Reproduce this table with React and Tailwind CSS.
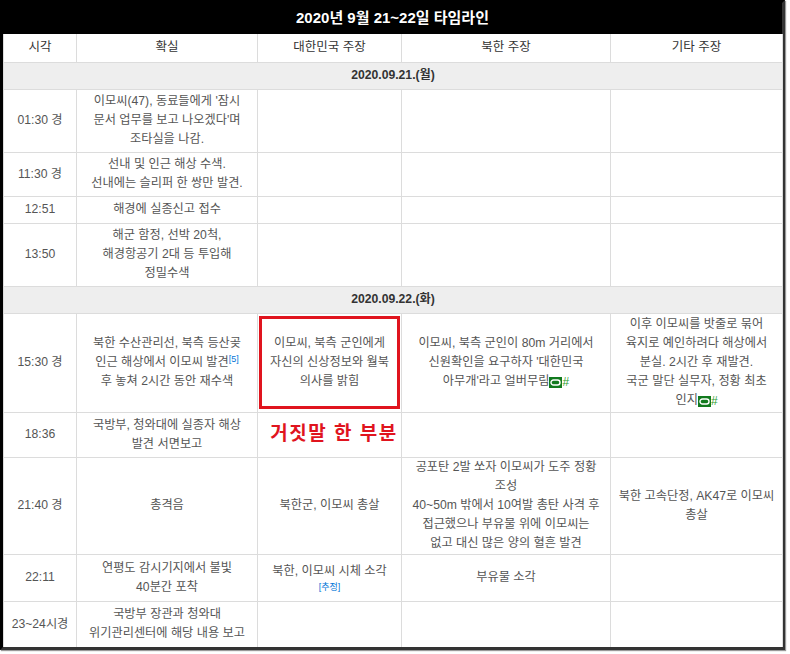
const FONT = { fontFamily: '"Liberation Sans", "Noto Sans CJK KR", sans-serif' }

function LinkIcon() {
  return (
    <span className="inline-flex items-center align-[-1px]">
      <span className="inline-flex items-center justify-center w-[13px] h-[11px] bg-[#127a1e]">
        <svg width="11" height="7" viewBox="0 0 11 7">
          <rect x="1" y="1" width="9" height="5" rx="2.5" fill="none" stroke="#fff" strokeWidth="1.4" />
        </svg>
      </span>
      <span className="text-[#2e9e2e] text-[12px]">#</span>
    </span>
  )
}

const td = 'border border-[#dcdcdc] text-center align-middle p-0'

function DateRow({ label, h }) {
  return (
    <tr className={h}>
      <td colSpan={5} className={`${td} bg-[#eeeeee] font-bold text-[#333]`}>{label}</td>
    </tr>
  )
}

export default function App() {
  return (
    <div className="w-[790px] h-[654px] bg-white" style={FONT}>
      <div className="w-[785px] border-[3px] border-black border-r-[#333] border-b-[#333] shadow-[1px_1px_1px_#999] bg-white">
        <div className="h-[31px] bg-black text-white font-bold text-[15px] flex items-center justify-center">
          2020년 9월 21~22일 타임라인
        </div>
        <table className="w-[779px] border-collapse table-fixed text-[12.2px] leading-[19px] text-[#555]">
          <colgroup>
            <col className="w-[73px]" />
            <col className="w-[181px]" />
            <col className="w-[144px]" />
            <col className="w-[209px]" />
            <col className="w-[172px]" />
          </colgroup>
          <tbody>
            <tr className="h-[28px] text-[#333] text-[12.5px]">
              <td className={`${td} border-t-0`}>시각</td>
              <td className={`${td} border-t-0`}>확실</td>
              <td className={`${td} border-t-0`}>대한민국 주장</td>
              <td className={`${td} border-t-0`}>북한 주장</td>
              <td className={`${td} border-t-0`}>기타 주장</td>
            </tr>
            <DateRow label="2020.09.21.(월)" h="h-[27px]" />
            <tr className="h-[63px]">
              <td className={td}>01:30 경</td>
              <td className={td}>이모씨(47), 동료들에게 '잠시<br />문서 업무를 보고 나오겠다'며<br />조타실을 나감.</td>
              <td className={td}></td>
              <td className={td}></td>
              <td className={td}></td>
            </tr>
            <tr className="h-[44px]">
              <td className={td}>11:30 경</td>
              <td className={td}>선내 및 인근 해상 수색.<br />선내에는 슬리퍼 한 쌍만 발견.</td>
              <td className={td}></td>
              <td className={td}></td>
              <td className={td}></td>
            </tr>
            <tr className="h-[27px]">
              <td className={td}>12:51</td>
              <td className={td}>해경에 실종신고 접수</td>
              <td className={td}></td>
              <td className={td}></td>
              <td className={td}></td>
            </tr>
            <tr className="h-[63px]">
              <td className={td}>13:50</td>
              <td className={td}>해군 함정, 선박 20척,<br />해경항공기 2대 등 투입해<br />정밀수색</td>
              <td className={td}></td>
              <td className={td}></td>
              <td className={td}></td>
            </tr>
            <DateRow label="2020.09.22.(화)" h="h-[27px]" />
            <tr className="h-[99px]">
              <td className={td}>15:30 경</td>
              <td className={td}>
                북한 수산관리선, 북측 등산곶<br />인근 해상에서 이모씨 발견<sup className="text-[9px] text-[#0275d8]">[5]</sup><br />후 놓쳐 2시간 동안 재수색
              </td>
              <td className={`${td} px-[1px]`}>
                <div className="h-[93px] border-[3px] border-[#e0141e] flex items-center justify-center">
                  <span>이모씨, 북측 군인에게<br />자신의 신상정보와 월북<br />의사를 밝힘</span>
                </div>
              </td>
              <td className={td}>
                이모씨, 북측 군인이 80m 거리에서<br />신원확인을 요구하자 '대한민국<br />아무개'라고 얼버무림<LinkIcon />
              </td>
              <td className={td}>
                이후 이모씨를 밧줄로 묶어<br />육지로 예인하려다 해상에서<br />분실. 2시간 후 재발견.<br />국군 말단 실무자, 정황 최초<br />인지<LinkIcon />
              </td>
            </tr>
            <tr className="h-[45px]">
              <td className={td}>18:36</td>
              <td className={td}>국방부, 청와대에 실종자 해상<br />발견 서면보고</td>
              <td className={td}>
                <span className="ml-[9px] text-[#e0141e] font-bold text-[19px] tracking-[1.5px]">거짓말 한 부분</span>
              </td>
              <td className={td}></td>
              <td className={td}></td>
            </tr>
            <tr className="h-[97px]">
              <td className={td}>21:40 경</td>
              <td className={td}>총격음</td>
              <td className={td}>북한군, 이모씨 총살</td>
              <td className={td}>
                공포탄 2발 쏘자 이모씨가 도주 정황<br />조성<br />40~50m 밖에서 10여발 총탄 사격 후<br />접근했으나 부유물 위에 이모씨는<br />없고 대신 많은 양의 혈흔 발견
              </td>
              <td className={td}>북한 고속단정, AK47로 이모씨<br />총살</td>
            </tr>
            <tr className="h-[47px]">
              <td className={td}>22:11</td>
              <td className={td}>연평도 감시기지에서 불빛<br />40분간 포착</td>
              <td className={td}>
                북한, 이모씨 시체 소각<br />
                <span className="block text-[9px] leading-[12px] text-[#0275d8]">[추정]</span>
              </td>
              <td className={td}>부유물 소각</td>
              <td className={td}></td>
            </tr>
            <tr className="h-[46px]">
              <td className={`${td} border-b-0`}>23~24시경</td>
              <td className={`${td} border-b-0`}>국방부 장관과 청와대<br />위기관리센터에 해당 내용 보고</td>
              <td className={`${td} border-b-0`}></td>
              <td className={`${td} border-b-0`}></td>
              <td className={`${td} border-b-0`}></td>
            </tr>
          </tbody>
        </table>
      </div>
    </div>
  )
}
